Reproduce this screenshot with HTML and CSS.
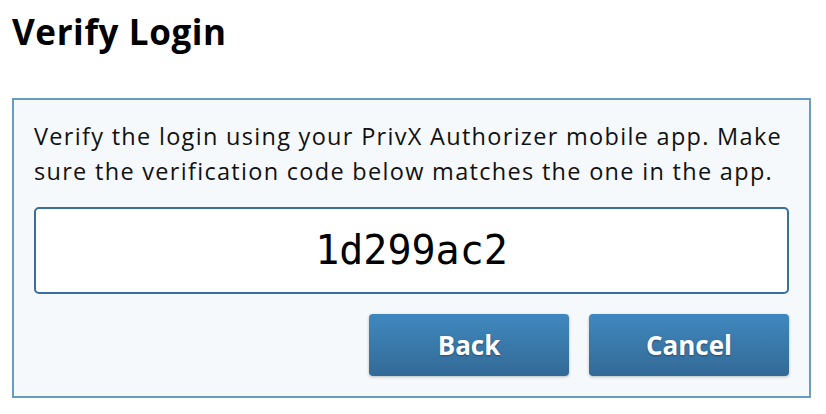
FILE: index.html
```html
<!DOCTYPE html>
<html lang="en">
<head>
    <meta charset="UTF-8">
    <meta name="viewport" content="width=device-width, initial-scale=1.0">
    <title>Verify Login</title>
    <link rel="stylesheet" href="styles.css">
</head>
<body>
    <h1>Verify Login</h1>

    <div class="verify-box">
        <p class="verify-text">Verify the login using your PrivX Authorizer mobile app. Make sure the verification code below matches the one in the app.</p>
        <div class="code-field">1d299ac2</div>
        <div class="button-group">
            <button class="btn">Back</button>
            <button class="btn">Cancel</button>
        </div>
    </div>
</body>
</html>
```

FILE: styles.css
```css
body {
    font-family: "Open Sans", Lato, sans-serif;
    margin: 0;
    padding: 0 15px 0 12px;
    background: #fff;
    color: #111;
}
h1 {
    font-size: 35px;
    font-weight: 700;
    margin: 8px 0 0 0;
    line-height: 48px;
    height: 90px;
    color: #000;
    letter-spacing: 0.6px;
}
.verify-box {
    border: 2px solid #6a9bc1;
    background-color: #f5f9fc;
    padding: 19px 20px 20px 20px;
}
.verify-text {
    font-size: 23.5px;
    line-height: 35px;
    letter-spacing: 1.3px;
    margin: 0 0 18px 0;
    color: #111;
}
.code-field {
    height: 83px;
    border: 2px solid #3b6f9b;
    border-radius: 5px;
    background: #fff;
    font-family: "DejaVu Sans Mono", monospace;
    font-size: 40px;
    line-height: 83px;
    text-align: center;
    color: #000;
}
.button-group {
    display: flex;
    justify-content: flex-end;
    gap: 20px;
    margin-top: 20px;
}
.btn {
    width: 200px;
    height: 62px;
    border: none;
    border-radius: 4px;
    background: linear-gradient(#4088bf, #336a96);
    color: #fff;
    font-family: "Open Sans", sans-serif;
    font-weight: 700;
    font-size: 26px;
    text-shadow: 0 1px 2px rgba(0, 0, 0, 0.35);
    box-shadow: 0 1px 3px rgba(0, 0, 0, 0.25);
    cursor: pointer;
}
```
